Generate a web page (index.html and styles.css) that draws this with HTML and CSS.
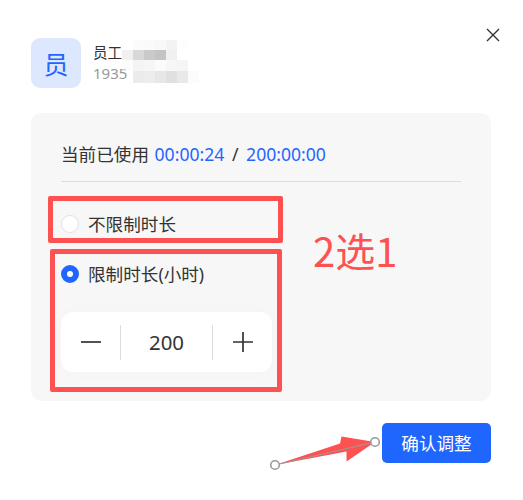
FILE: index.html
```html
<!DOCTYPE html>
<html lang="zh">
<head>
<meta charset="utf-8">
<title>调整时长</title>
<link rel="stylesheet" href="styles.css">
</head>
<body>
<div class="dialog">
  <svg class="close" viewBox="0 0 14 14" width="14" height="14"><path d="M1 1L13 13M13 1L1 13" stroke="#333" stroke-width="1.4" fill="none"/></svg>
  <header class="user">
    <div class="avatar">员</div>
    <div class="info">
      <div class="name">员工</div>
      <div class="phone">1935</div>
    </div>
    <div class="mosaic">
      <i class="m1 o1"></i><i class="m2 o1"></i><i class="m3 o1"></i><i class="m4 o1"></i><i class="m5 o1"></i>
      <i class="m6 o2"></i><i class="m7 o2"></i><i class="m8 o2"></i><i class="m9 o2"></i><i class="m10 o2"></i>
      <i class="m11 o3"></i><i class="m12 o3"></i><i class="m13 o3"></i><i class="m14 o3"></i><i class="m15 o3"></i><i class="m16 o3"></i>
      <i class="m17 o4"></i><i class="m18 o4"></i><i class="m19 o4"></i><i class="m20 o4"></i><i class="m21 o4"></i><i class="m22 o4"></i>
    </div>
  </header>
  <section class="panel">
    <div class="usage">当前已使用 <span class="blue first-time">00:00:24</span> <b class="slash">/</b> <span class="blue">200:00:00</span></div>
    <div class="option first"><span class="radio"></span>不限制时长</div>
    <div class="option second"><span class="radio on"></span>限制时长(小时)</div>
    <div class="stepper">
      <div class="step"><svg viewBox="0 0 20 20" width="20" height="20"><path d="M0 10H20" stroke="#333" stroke-width="1.7"/></svg></div>
      <div class="value">200</div>
      <div class="step"><svg viewBox="0 0 20 20" width="20" height="20"><path d="M0 10H20M10 0V20" stroke="#333" stroke-width="1.7"/></svg></div>
    </div>
  </section>
  <footer class="actions"><button class="confirm">确认调整</button></footer>
</div>
<div class="mark box-a"></div>
<div class="mark box-b"></div>
<div class="note">2选1</div>
<svg class="arrow" viewBox="0 0 523 500" width="523" height="500">
  <polygon points="275,465 340,443.5 341.5,436.5 375,442 346.5,461.5 346.5,451.5" fill="#fe5252"/>
  <line x1="275" y1="465" x2="375" y2="442" stroke="#999" stroke-width="1.2"/>
  <circle cx="275" cy="465" r="4.3" fill="#fff" stroke="#999" stroke-width="1.6"/>
  <circle cx="375" cy="442" r="4.3" fill="#fff" stroke="#999" stroke-width="1.6"/>
</svg>
</body>
</html>
```
FILE: styles.css
```css
* { box-sizing: border-box; }
html, body { margin: 0; padding: 0; }
body {
  width: 523px;
  height: 500px;
  background: #fff;
  position: relative;
  overflow: hidden;
  font-family: "Noto Sans", "Noto Sans CJK SC", sans-serif;
  color: #333;
}
.dialog { padding: 38px 32px 0 31px; position: relative; }
.close { position: absolute; left: 486px; top: 28px; }
.user { display: flex; gap: 12px; height: 50px; position: relative; }
.avatar {
  width: 50px; height: 50px;
  border-radius: 9px;
  background: #dde8ff;
  color: #1f66ff;
  font-size: 25px;
  display: flex; align-items: center; justify-content: center;
}
.info { padding-top: 4px; }
.name { font-size: 14.5px; line-height: 21px; color: #333; }
.phone { font-size: 15px; line-height: 21px; color: #999; }
.mosaic { position: absolute; left: 91px; top: 1.5px; width: 80px; height: 44px; display: grid; grid-template-columns: repeat(7, 11px); grid-template-rows: 10px 10.5px 11px 11.5px; }
.mosaic i { display: block; }
.o1 { grid-row: 1; } .o2 { grid-row: 2; } .o3 { grid-row: 3; } .o4 { grid-row: 4; }
.m1 { grid-column: 2; background: #fbfbfb; } .m2 { grid-column: 3; background: #fafafa; } .m3 { grid-column: 4; background: #f8f8f8; } .m4 { grid-column: 5; background: #f3f3f3; } .m5 { grid-column: 6; background: #fdfdfd; }
.m6 { grid-column: 1; background: #f0f0f0; } .m7 { grid-column: 2; background: #d8d8d8; } .m8 { grid-column: 3; background: #cacaca; } .m9 { grid-column: 4; background: #c4c4c4; } .m10 { grid-column: 5; background: #f0f0f0; }
.m11 { grid-column: 2; background: #f4f4f4; } .m12 { grid-column: 3; background: #f6f6f6; } .m13 { grid-column: 4; background: #fbfbfb; } .m14 { grid-column: 5; background: #f7f7f7; } .m15 { grid-column: 6; background: #f5f5f5; } .m16 { grid-column: 1; background: rgba(250,250,250,.5); }
.m17 { grid-column: 2; background: #ebebeb; } .m18 { grid-column: 3; background: #ededed; } .m19 { grid-column: 4; background: #e7e7e7; } .m20 { grid-column: 5; background: #e0e0e0; } .m21 { grid-column: 6; background: #e9e9e9; } .m22 { grid-column: 7; background: #fbfbfb; }
.panel {
  margin-top: 25px;
  width: 460px;
  height: 288px;
  background: #f7f7f7;
  border-radius: 10px;
  padding: 29px 30px 0;
}
.usage {
  font-size: 17.6px;
  line-height: 25px;
  height: 40px;
  border-bottom: 1px solid #dcdcdc;
  white-space: nowrap;
  color: #333;
}
.blue { color: #1f66ff; }
.first-time { margin-left: 1px; }
.slash { font-weight: 400; margin: 0 3px; }
.option {
  display: flex; align-items: center; gap: 9px;
  font-size: 17.6px; line-height: 24px; color: #333;
}
.first { margin-top: 30px; }
.second { margin-top: 26px; }
.radio {
  width: 18px; height: 18px; border-radius: 50%;
  background: #fff; border: 1px solid #e0e0e8;
  flex: none;
}
.radio.on { background: #fff; border: 6px solid #1f66ff; }
.stepper {
  margin-top: 26px;
  width: 211px; height: 60px;
  background: #fff;
  border-radius: 12px;
  display: flex; align-items: center;
  box-shadow: 0 0 20px rgba(0,0,0,.015);
}
.step { width: 59px; height: 100%; display: flex; align-items: center; justify-content: center; flex: none; }
.value {
  width: 93px; height: 35px;
  border-left: 1px solid #dcdcdc;
  border-right: 1px solid #dcdcdc;
  font-size: 20.4px; line-height: 35px; text-align: center; color: #333;
  flex: none;
}
.actions { display: flex; justify-content: flex-end; margin-top: 22px; }
.confirm {
  width: 109px; height: 40px;
  border: 0; border-radius: 5px;
  padding: 0 0 2px;
  background: #1f66ff; color: #fff;
  font: 17.6px "Noto Sans CJK SC", sans-serif;
}
.mark { position: absolute; border: 5px solid #fe5252; border-radius: 2px; }
.box-a { left: 48px; top: 196px; width: 235px; height: 47px; }
.box-b { left: 50px; top: 249px; width: 232px; height: 143px; }
.note { position: absolute; left: 313px; top: 224px; font-size: 40px; line-height: 52px; color: #fe5252; font-family: "Noto Sans CJK SC", sans-serif; }
.arrow { position: absolute; left: 0; top: 0; }
```
